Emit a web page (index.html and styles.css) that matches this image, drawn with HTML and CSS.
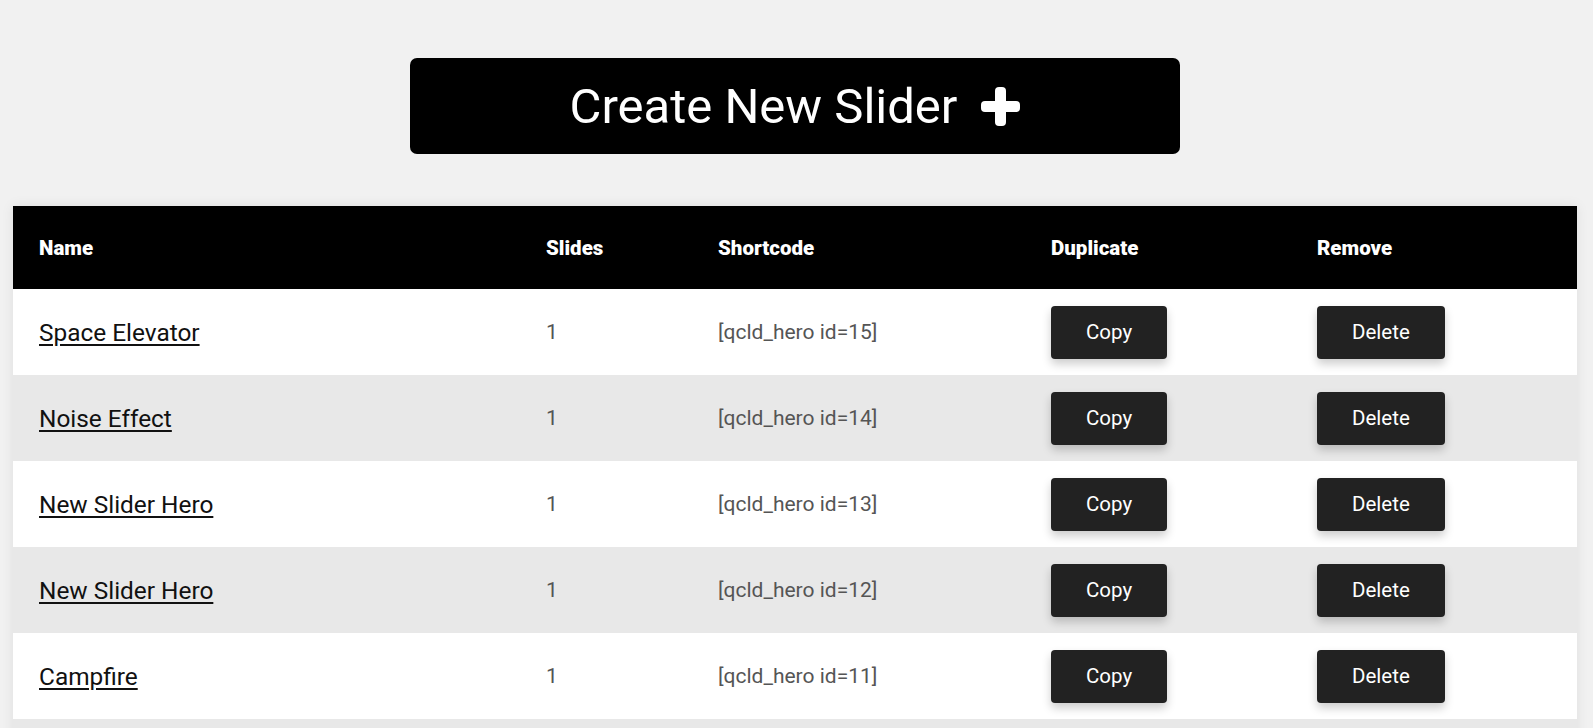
FILE: index.html
```html
<!DOCTYPE html>
<html lang="en">
<head>
  <meta charset="UTF-8">
  <meta name="viewport" content="width=device-width, initial-scale=1.0">
  <title>Hero Sliders</title>
  <link rel="stylesheet" href="styles.css">
</head>
<body>
  <div class="page">
    <div class="create-wrap">
      <a href="#" class="create-btn">
        <span>Create New Slider</span>
        <svg class="plus" width="39" height="39" viewBox="0 0 39 39" aria-hidden="true">
          <rect x="14" y="0" width="11" height="39" rx="4" fill="#fff"/>
          <rect x="0" y="14" width="39" height="11" rx="4" fill="#fff"/>
        </svg>
      </a>
    </div>

    <table class="slider-table">
      <colgroup>
        <col class="col-name">
        <col class="col-slides">
        <col class="col-code">
        <col class="col-dup">
        <col class="col-remove">
      </colgroup>
      <thead>
        <tr>
          <th>Name</th>
          <th>Slides</th>
          <th>Shortcode</th>
          <th>Duplicate</th>
          <th>Remove</th>
        </tr>
      </thead>
      <tbody>
        <tr>
          <td><a href="#" class="slider-name">Space Elevator</a></td>
          <td class="muted">1</td>
          <td class="muted">[qcld_hero id=15]</td>
          <td><button class="action-btn">Copy</button></td>
          <td><button class="action-btn">Delete</button></td>
        </tr>
        <tr>
          <td><a href="#" class="slider-name">Noise Effect</a></td>
          <td class="muted">1</td>
          <td class="muted">[qcld_hero id=14]</td>
          <td><button class="action-btn">Copy</button></td>
          <td><button class="action-btn">Delete</button></td>
        </tr>
        <tr>
          <td><a href="#" class="slider-name">New Slider Hero</a></td>
          <td class="muted">1</td>
          <td class="muted">[qcld_hero id=13]</td>
          <td><button class="action-btn">Copy</button></td>
          <td><button class="action-btn">Delete</button></td>
        </tr>
        <tr>
          <td><a href="#" class="slider-name">New Slider Hero</a></td>
          <td class="muted">1</td>
          <td class="muted">[qcld_hero id=12]</td>
          <td><button class="action-btn">Copy</button></td>
          <td><button class="action-btn">Delete</button></td>
        </tr>
        <tr>
          <td><a href="#" class="slider-name">Campfire</a></td>
          <td class="muted">1</td>
          <td class="muted">[qcld_hero id=11]</td>
          <td><button class="action-btn">Copy</button></td>
          <td><button class="action-btn">Delete</button></td>
        </tr>
        <tr class="empty-row">
          <td></td>
          <td></td>
          <td></td>
          <td></td>
          <td></td>
        </tr>
      </tbody>
    </table>
  </div>
</body>
</html>
```

FILE: styles.css
```css
/* Basic styles */
body {
  margin: 0;
  padding: 0;
  font-family: Roboto, "Liberation Sans", sans-serif;
  background-color: #f1f1f1;
}
.page {
  padding: 58px 16px 0 13px;
}
.create-wrap {
  display: flex;
  justify-content: center;
  margin-bottom: 52px;
}
.create-btn {
  width: 770px;
  height: 96px;
  background: #000;
  color: #fff;
  border-radius: 7px;
  display: flex;
  align-items: center;
  justify-content: center;
  gap: 24px;
  text-decoration: none;
  font-size: 49px;
  box-sizing: border-box;
}
.plus {
  display: block;
}

/* Table */
.slider-table {
  width: 100%;
  border-collapse: collapse;
  table-layout: fixed;
  background: #fff;
  box-shadow: 0 0 12px rgba(0, 0, 0, 0.08);
}
.col-name { width: 507px; }
.col-slides { width: 172px; }
.col-code { width: 333px; }
.col-dup { width: 266px; }
.slider-table th {
  background: #000;
  color: #fff;
  text-align: left;
  font-size: 20.5px;
  font-weight: 900;
  height: 83px;
  padding: 0 0 0 26px;
  box-sizing: border-box;
}
.slider-table td {
  height: 86px;
  padding: 0 0 0 26px;
  box-sizing: border-box;
  vertical-align: middle;
}
.slider-table tbody tr:nth-child(even) td {
  background: #e8e8e8;
}
.slider-name {
  color: #111;
  font-size: 24.4px;
  text-decoration: underline;
  text-underline-offset: 3px;
}
.muted {
  color: #555;
  font-size: 21px;
}
.action-btn {
  background: #222;
  color: #fff;
  border: none;
  border-radius: 4px;
  height: 53px;
  padding: 0 35px;
  font-family: inherit;
  font-size: 20.5px;
  cursor: pointer;
  box-shadow: 0 5px 10px rgba(0, 0, 0, 0.2);
}
.action-btn:hover {
  background: #000;
}
```
